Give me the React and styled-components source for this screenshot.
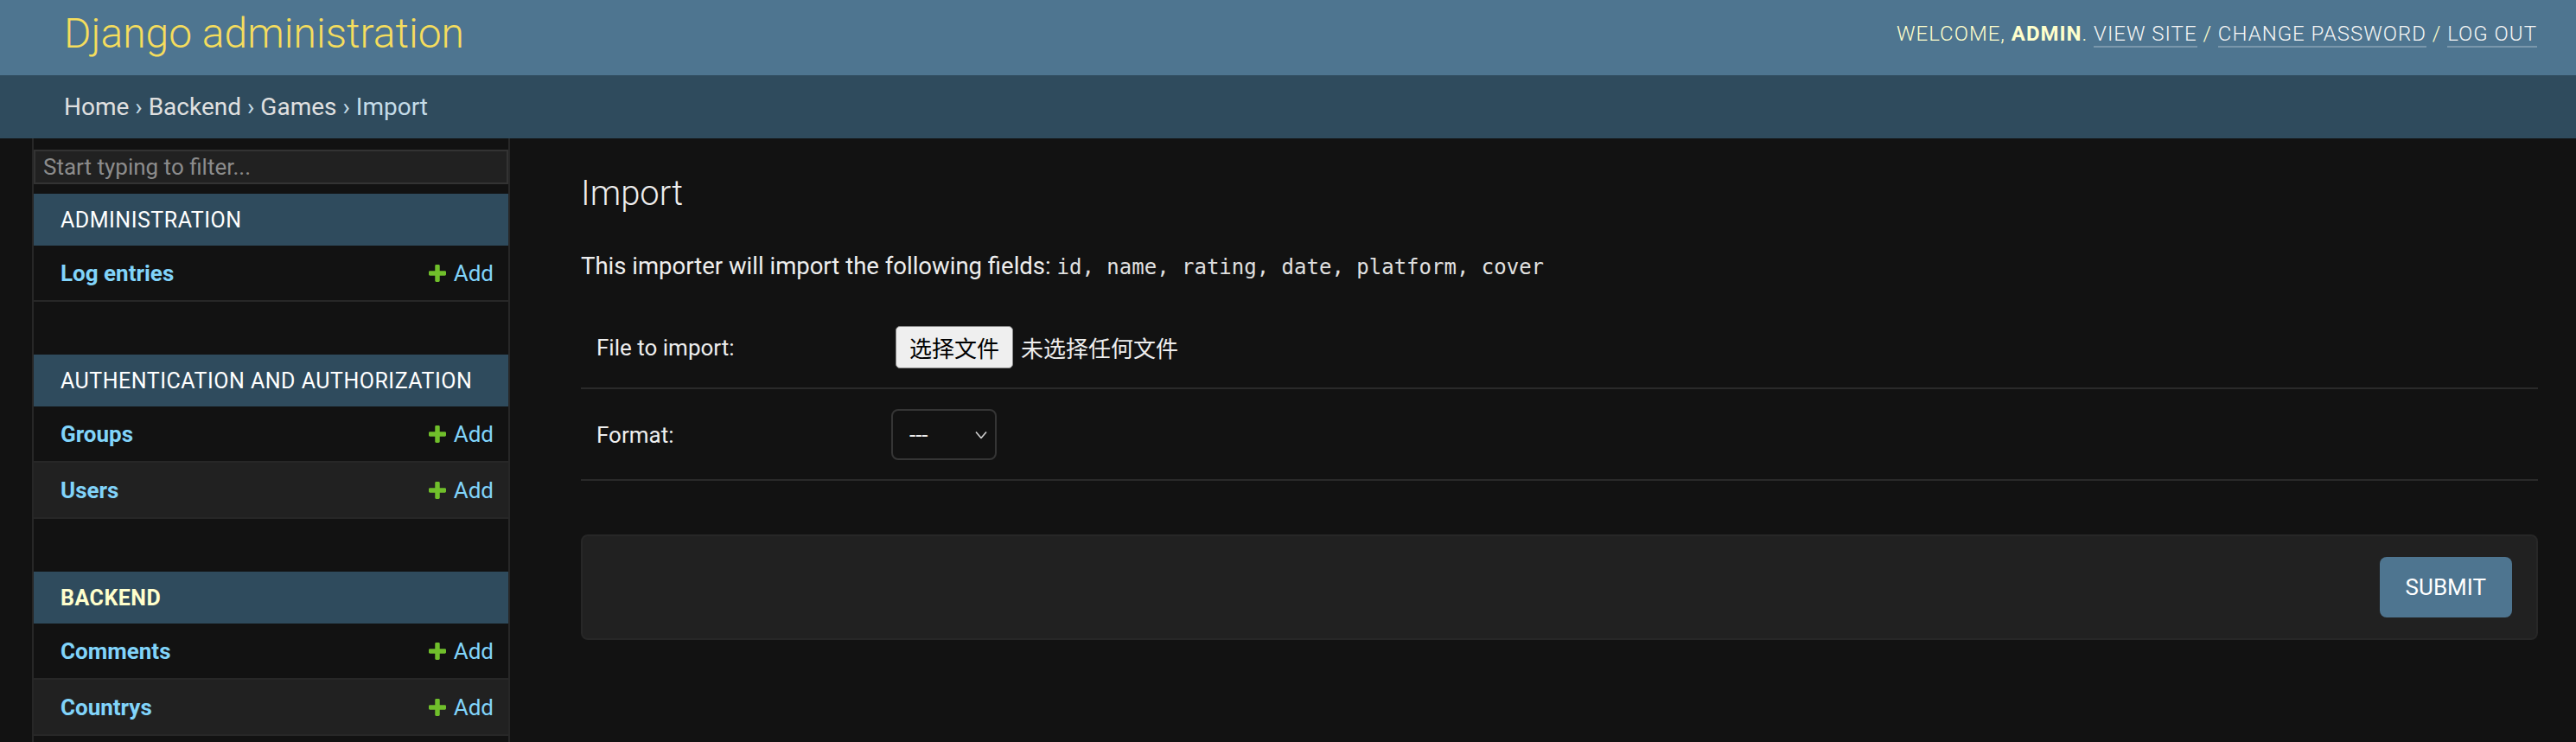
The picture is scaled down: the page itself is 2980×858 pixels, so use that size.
import styled, { createGlobalStyle } from "styled-components";

const GlobalStyle = createGlobalStyle`
  html, body {
    margin: 0;
    padding: 0;
    background: #121212;
    overflow: hidden;
  }
  body {
    font-family: Roboto, "Noto Sans", sans-serif;
    color: #eeeeee;
  }
  * {
    box-sizing: border-box;
  }
`;

const Header = styled.header`
  height: 87px;
  display: flex;
  align-items: center;
  justify-content: space-between;
  padding: 0 45px 10px 74px;
  background: #4e7590;
`;

const Branding = styled.h1`
  margin: 0;
  font-size: 48px;
  font-weight: 300;
  color: #f5dd5d;
  line-height: normal;
`;

const UserTools = styled.div`
  font-size: 24px;
  font-weight: 300;
  letter-spacing: 1px;
  text-transform: uppercase;
  color: #ffffcc;

  strong {
    font-weight: 700;
  }
`;

const ToolLink = styled.a`
  color: #f5f5f5;
  text-decoration: none;
  border-bottom: 2px solid rgba(255, 255, 255, 0.25);
`;

const Breadcrumbs = styled.div`
  height: 73px;
  display: flex;
  align-items: center;
  padding: 0 74px;
  background: #2f4b5d;
  font-size: 28px;
  color: #c4dce8;
  white-space: pre;
`;

const Crumb = styled.a`
  color: #e0e0e0;
  text-decoration: none;
`;

const Main = styled.div`
  display: flex;
  min-height: 800px;
`;

const Toggle = styled.div`
  width: 39px;
  flex-shrink: 0;
  border-right: 2px solid #272727;
`;

const Sidebar = styled.nav`
  width: 551px;
  flex-shrink: 0;
  padding-top: 13px;
  border-right: 2px solid #272727;
`;

const Filter = styled.input`
  display: block;
  width: 100%;
  height: 40px;
  margin: 0 0 11px;
  padding: 0 9px;
  background: #212121;
  border: 2px solid #333333;
  color: #eeeeee;
  font-family: Roboto, sans-serif;
  font-size: 26px;
  outline: none;

  &::placeholder {
    color: #8c8c8c;
  }
`;

const Module = styled.div`
  margin-bottom: 61px;
`;

const Caption = styled.div`
  height: 60px;
  display: flex;
  align-items: center;
  padding-left: 31px;
  background: #2f4b5d;
  font-size: 25px;
  letter-spacing: 0.5px;
  text-transform: uppercase;
  color: ${(p) => (p.$current ? "#ffffcc" : "#ffffff")};
  font-weight: ${(p) => (p.$current ? 700 : 400)};
`;

const ModelRow = styled.div`
  height: 65px;
  display: flex;
  align-items: center;
  justify-content: space-between;
  padding: 0 17px 0 31px;
  border-bottom: 2px solid #272727;
  background: ${(p) => (p.$alt ? "#212121" : "transparent")};
`;

const ModelName = styled.a`
  font-size: 26px;
  font-weight: 700;
  color: #81d4fa;
  text-decoration: none;
`;

const AddLink = styled.a`
  display: flex;
  align-items: center;
  gap: 9px;
  font-size: 26px;
  color: #81d4fa;
  text-decoration: none;
`;

const Content = styled.main`
  flex: 1;
  padding: 40px 44px 0 82px;
`;

const Title = styled.h1`
  margin: 0;
  font-size: 40px;
  font-weight: 300;
  line-height: 48px;
  color: #eeeeee;
`;

const Intro = styled.p`
  margin: 40px 0 0;
  font-size: 27.5px;
  line-height: 39px;
  color: #eeeeee;
`;

const Code = styled.code`
  font-family: "DejaVu Sans Mono", "Liberation Mono", monospace;
  font-size: 24px;
  color: #e0e0e0;
`;

const Form = styled.div`
  margin-top: 25px;
`;

const FormRow = styled.div`
  display: flex;
  align-items: center;
  padding: 23px 18px 22px;
  border-bottom: 2px solid #2a2a2a;
`;

const Label = styled.label`
  width: 341px;
  flex-shrink: 0;
  font-size: 26px;
  color: #eeeeee;
`;

const FileField = styled.div`
  display: flex;
  align-items: center;
  gap: 9px;
  margin-left: 5px;
  font-family: "Noto Sans CJK SC", sans-serif;
  font-size: 26px;
`;

const FileButton = styled.button`
  height: 49px;
  padding: 0 15px;
  background: #efefef;
  border: 1px solid #8a8a8a;
  border-radius: 5px;
  color: #000000;
  font-family: "Noto Sans CJK SC", sans-serif;
  font-size: 26px;
`;

const SelectWrap = styled.div`
  position: relative;
  width: 122px;
  height: 59px;
`;

const Select = styled.select`
  appearance: none;
  width: 100%;
  height: 100%;
  padding: 0 0 0 19px;
  background: #121212;
  border: 2px solid #353535;
  border-radius: 8px;
  color: #eeeeee;
  font-family: Roboto, sans-serif;
  font-size: 26px;
`;

const Chevron = styled.svg`
  position: absolute;
  right: 11px;
  top: 50%;
  transform: translateY(-50%);
  pointer-events: none;
`;

const SubmitRow = styled.div`
  display: flex;
  justify-content: flex-end;
  margin-top: 62px;
  padding: 24px 28px;
  background: #212121;
  border: 2px solid #272727;
  border-radius: 8px;
`;

const SubmitButton = styled.button`
  height: 70px;
  padding: 0 30px;
  background: #4e7590;
  border: none;
  border-radius: 8px;
  color: #ffffff;
  font-family: Roboto, sans-serif;
  font-size: 26px;
  text-transform: uppercase;
`;

const PlusIcon = () => (
  <svg width="20" height="20" viewBox="192 192 1408 1408">
    <path
      fill="#70bf2b"
      d="M1600 796v192q0 40-28 68t-68 28h-416v416q0 40-28 68t-68 28h-192q-40 0-68-28t-28-68v-416h-416q-40 0-68-28t-28-68v-192q0-40 28-68t68-28h416v-416q0-40 28-68t68-28h192q40 0 68 28t28 68v416h416q40 0 68 28t28 68z"
    />
  </svg>
);

const modules = [
  { name: "Administration", models: ["Log entries"] },
  { name: "Authentication and Authorization", models: ["Groups", "Users"] },
  { name: "Backend", current: true, models: ["Comments", "Countrys"] },
];

const App = () => {
  return (
    <>
      <GlobalStyle />
      <Header>
        <Branding>Django administration</Branding>
        <UserTools>
          Welcome, <strong>admin</strong>. <ToolLink href="#">View site</ToolLink> /{" "}
          <ToolLink href="#">Change password</ToolLink> / <ToolLink href="#">Log out</ToolLink>
        </UserTools>
      </Header>
      <Breadcrumbs>
        <Crumb href="#">Home</Crumb>
        {" › "}
        <Crumb href="#">Backend</Crumb>
        {" › "}
        <Crumb href="#">Games</Crumb>
        {" › Import"}
      </Breadcrumbs>
      <Main>
        <Toggle />
        <Sidebar>
          <Filter placeholder="Start typing to filter..." />
          {modules.map((m) => (
            <Module key={m.name}>
              <Caption $current={m.current}>{m.name}</Caption>
              {m.models.map((model, i) => (
                <ModelRow key={model} $alt={i % 2 === 1}>
                  <ModelName href="#">{model}</ModelName>
                  <AddLink href="#">
                    <PlusIcon />
                    Add
                  </AddLink>
                </ModelRow>
              ))}
            </Module>
          ))}
        </Sidebar>
        <Content>
          <Title>Import</Title>
          <Intro>
            This importer will import the following fields:{" "}
            <Code>id, name, rating, date, platform, cover</Code>
          </Intro>
          <Form>
            <FormRow>
              <Label>File to import:</Label>
              <FileField>
                <FileButton>选择文件</FileButton>
                <span>未选择任何文件</span>
              </FileField>
            </FormRow>
            <FormRow>
              <Label>Format:</Label>
              <SelectWrap>
                <Select defaultValue="">
                  <option value="">---</option>
                </Select>
                <Chevron width="14" height="9" viewBox="0 0 14 9">
                  <polyline points="1,1 7,8 13,1" fill="none" stroke="#cfcfcf" strokeWidth="1.6" />
                </Chevron>
              </SelectWrap>
            </FormRow>
          </Form>
          <SubmitRow>
            <SubmitButton>Submit</SubmitButton>
          </SubmitRow>
        </Content>
      </Main>
    </>
  );
};

export default App;
